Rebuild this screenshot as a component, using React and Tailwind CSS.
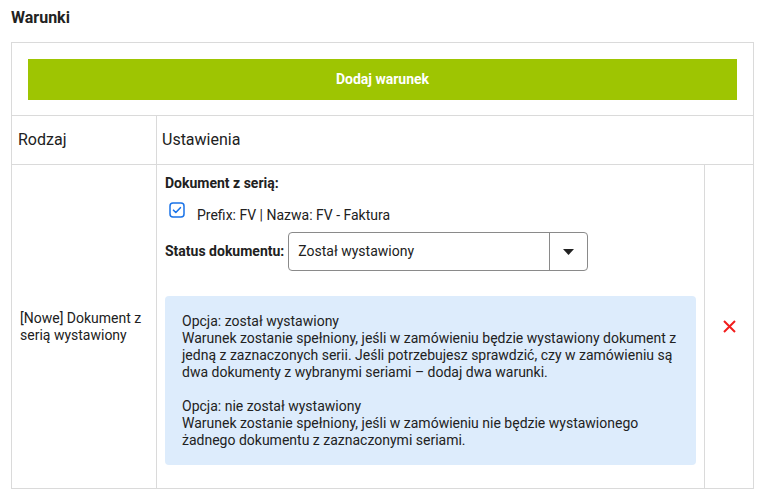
export default function App() {
  return (
    <div className="min-h-screen bg-white text-[#212121]" style={{ fontFamily: 'Roboto, "Liberation Sans", sans-serif' }}>
      <div className="pt-[8px] px-[11px]">
        <h2 className="text-[16px] font-bold leading-[20px] text-[#222]">Warunki</h2>

        <div className="mt-[14px] w-[743px] border border-[#dadada]">
          {/* Add button */}
          <div className="px-4 pt-4 pb-[15px]">
            <button
              type="button"
              className="w-full h-[41px] bg-[#9ec502] text-white text-[14px] font-bold"
            >
              Dodaj warunek
            </button>
          </div>

          {/* Header row */}
          <div className="grid grid-cols-[144px_1fr] border-t border-[#dadada] h-[49px] text-[16px]">
            <div className="flex items-center px-[6px]">Rodzaj</div>
            <div className="flex items-center px-[5px] border-l border-[#dadada]">Ustawienia</div>
          </div>

          {/* Condition row */}
          <div className="grid grid-cols-[144px_548px_1fr] border-t border-[#dadada]">
            <div className="flex items-center px-2 text-[14px] leading-[17px]">
              [Nowe] Dokument z serią wystawiony
            </div>

            <div className="border-l border-[#dadada] pl-2 pr-2 pt-[9px] pb-[23px]">
              <div className="text-[14px] font-bold leading-[18px]">Dokument z serią:</div>

              <label className="flex items-start mt-[10px] ml-1">
                <svg width="16" height="16" viewBox="0 0 16 16" className="shrink-0">
                  <rect x="1" y="1" width="14" height="14" rx="3" fill="white" stroke="#1a73e8" strokeWidth="1.5" />
                  <path d="M4.5 8.2l2.3 2.3 4.6-4.8" fill="none" stroke="#1a73e8" strokeWidth="1.6" strokeLinecap="round" strokeLinejoin="round" />
                </svg>
                <span className="ml-[12px] mt-[5px] text-[14px] leading-[17px]">Prefix: FV | Nazwa: FV - Faktura</span>
              </label>

              <div className="flex items-center mt-[8px]">
                <span className="text-[14px] font-bold mr-1">Status dokumentu:</span>
                <div className="flex w-[300px] h-[39px] border border-[#8a8a8a] rounded-[4px]">
                  <div className="flex-1 flex items-center px-[9px] text-[14px]">Został wystawiony</div>
                  <div className="w-[38px] flex items-center justify-center border-l border-[#8a8a8a]">
                    <svg width="11" height="6" viewBox="0 0 11 6">
                      <path d="M0 0h11L5.5 6z" fill="#222" />
                    </svg>
                  </div>
                </div>
              </div>

              <div className="mt-[25px] w-[531px] rounded-[4px] bg-[#ddecfc] px-[17px] pt-[17px] pb-[16px] text-[14px] leading-[17px] text-[#222]">
                <p>Opcja: został wystawiony</p>
                <p>
                  Warunek zostanie spełniony, jeśli w zamówieniu będzie wystawiony dokument z jedną z zaznaczonych serii.
                  Jeśli potrzebujesz sprawdzić, czy w zamówieniu są dwa dokumenty z wybranymi seriami – dodaj dwa warunki.
                </p>
                <p className="mt-[17px]">Opcja: nie został wystawiony</p>
                <p>
                  Warunek zostanie spełniony, jeśli w zamówieniu nie będzie wystawionego żadnego dokumentu z zaznaczonymi seriami.
                </p>
              </div>
            </div>

            <div className="flex items-center justify-center border-l border-[#dadada]">
              <svg width="13" height="13" viewBox="0 0 13 13">
                <path d="M1 1l11 11M12 1L1 12" stroke="#f21d1d" strokeWidth="2" />
              </svg>
            </div>
          </div>
        </div>
      </div>
    </div>
  );
}
